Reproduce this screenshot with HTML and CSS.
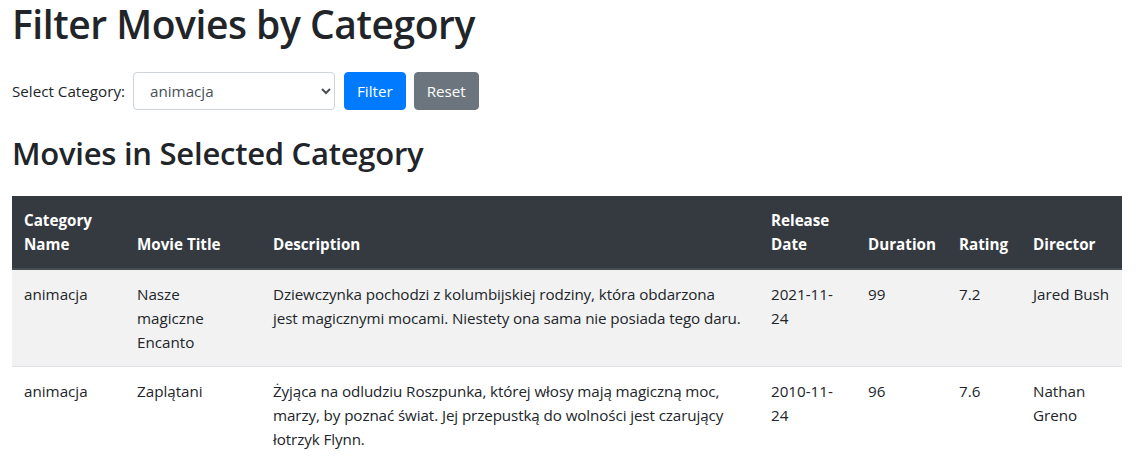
FILE: index.html
```html
<!DOCTYPE html>
<html lang="pl">
<head>
<meta charset="utf-8">
<title>Filter Movies by Category</title>
<link rel="stylesheet" href="styles.css">
</head>
<body>
<div class="page">
  <h1 class="title">Filter Movies by Category</h1>
  <form class="filter-form">
    <label class="filter-label" for="cat">Select Category:</label>
    <select id="cat" class="filter-select">
      <option>animacja</option>
    </select>
    <button type="button" class="btn btn-primary">Filter</button>
    <button type="button" class="btn btn-secondary">Reset</button>
  </form>
  <h2 class="subtitle">Movies in Selected Category</h2>
  <table class="movies">
    <colgroup>
      <col class="c-cat"><col class="c-title"><col class="c-desc"><col class="c-date"><col class="c-dur"><col class="c-rating"><col class="c-dir">
    </colgroup>
    <thead>
      <tr>
        <th>Category Name</th>
        <th>Movie Title</th>
        <th>Description</th>
        <th>Release Date</th>
        <th>Duration</th>
        <th>Rating</th>
        <th>Director</th>
      </tr>
    </thead>
    <tbody>
      <tr class="striped">
        <td>animacja</td>
        <td>Nasze magiczne Encanto</td>
        <td class="desc">Dziewczynka pochodzi z kolumbijskiej rodziny, która obdarzona<br>jest magicznymi mocami. Niestety ona sama nie posiada tego daru.</td>
        <td>2021-11-24</td>
        <td>99</td>
        <td>7.2</td>
        <td>Jared Bush</td>
      </tr>
      <tr>
        <td>animacja</td>
        <td>Zaplątani</td>
        <td class="desc">Żyjąca na odludziu Roszpunka, której włosy mają magiczną moc, marzy, by poznać świat. Jej przepustką do wolności jest czarujący łotrzyk Flynn.</td>
        <td>2010-11-24</td>
        <td>96</td>
        <td>7.6</td>
        <td>Nathan Greno</td>
      </tr>
    </tbody>
  </table>
</div>
</body>
</html>
```
FILE: styles.css
```css
* { box-sizing: border-box; }
html, body { margin: 0; padding: 0; background: #fff; }
body {
  font-family: "Open Sans", "Noto Sans", sans-serif;
  font-size: 15.2px;
  line-height: 24px;
  color: #212529;
}
.page { padding: 0 15px 0 12px; }
.title {
  margin: 0 0 24px;
  font-size: 39px;
  font-weight: 600;
  letter-spacing: -0.45px;
  line-height: 48px;
}
.filter-form {
  display: flex;
  align-items: center;
  margin: 0 0 24px;
}
.filter-label { margin-right: 8px; }
.filter-select {
  width: 202px;
  height: 38px;
  padding: 6px 12px;
  font: inherit;
  color: #495057;
  background: #fff;
  border: 1px solid #ced4da;
  border-radius: 4px;
  margin-right: 9px;
}
.btn {
  font: inherit;
  height: 38px;
  padding: 6px 12px;
  border: 1px solid transparent;
  border-radius: 4px;
  color: #fff;
  margin-right: 8px;
}
.btn-primary { background: #007bff; border-color: #007bff; }
.btn-secondary { background: #6c757d; border-color: #6c757d; }
.subtitle {
  margin: 0 0 24px;
  font-size: 31px;
  font-weight: 600;
  letter-spacing: -0.25px;
  line-height: 38px;
}
.movies {
  width: 1110px;
  table-layout: fixed;
  border-collapse: collapse;
}
.c-cat { width: 113px; }
.c-title { width: 136px; }
.c-desc { width: 498px; }
.c-date { width: 97px; }
.c-dur { width: 91px; }
.c-rating { width: 74px; }
.c-dir { width: 101px; }
.movies th, .movies td {
  padding: 12px;
  text-align: left;
  vertical-align: top;
  border-top: 1px solid #dee2e6;
}
.movies td.desc { letter-spacing: -0.1px; }
.movies thead th {
  vertical-align: bottom;
  background: #343a40;
  color: #fff;
  font-weight: 700;
  border-top: 0;
  border-bottom: 2px solid #454d55;
}
.movies .striped td { background: #f2f2f2; }
```
